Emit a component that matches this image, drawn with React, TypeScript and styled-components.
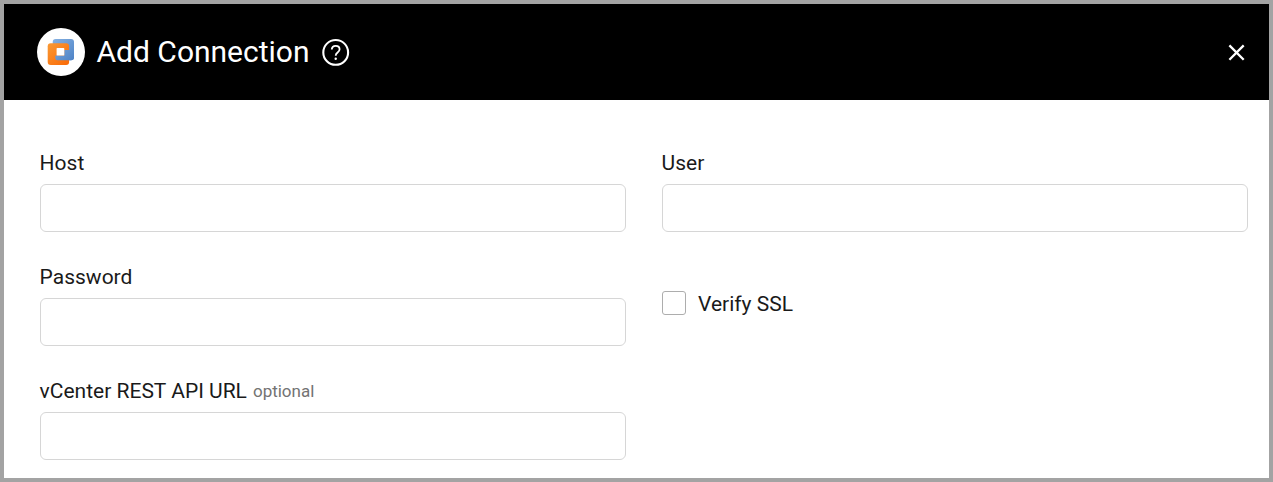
import React from "react";
import styled, { createGlobalStyle } from "styled-components";

const GlobalStyle = createGlobalStyle`
  *, *::before, *::after { box-sizing: border-box; }
  body { margin: 0; background: #fff; font-family: Roboto, sans-serif; color: #1a1a1a; }
`;

const Dialog = styled.section`
  display: flex;
  flex-direction: column;
  width: 100%;
  height: 482px;
  border: 4px solid #a3a3a3;
  background: #fff;
  overflow: hidden;
`;

const Header = styled.header`
  display: flex;
  align-items: center;
  flex: none;
  height: 96px;
  padding: 0 20px 0 33px;
  background: #000;
  color: #fff;
`;

const LogoBadge = styled.div`
  width: 48px;
  height: 48px;
  border-radius: 50%;
  background: #fff;
  svg { display: block; }
`;

const Title = styled.h1`
  width: 213px;
  margin: 0 0 0 11.5px;
  font-size: 30px;
  font-weight: 400;
  line-height: 40px;
  white-space: nowrap;
`;

const IconButton = styled.button<{ $end?: boolean }>`
  display: flex;
  padding: 0;
  border: 0;
  background: none;
  color: inherit;
  margin-left: ${({ $end }) => ($end ? "auto" : "12px")};
`;

const Form = styled.form`
  display: grid;
  grid-template-columns: 586px 586px;
  grid-auto-rows: 84px;
  gap: 30px 36px;
  padding: 48px 0 0 36px;
`;

const Field = styled.label`
  display: flex;
  flex-direction: column;
`;

const LabelText = styled.span`
  display: flex;
  height: 36px;
  margin-left: -0.4px;
  font-size: 21px;
  line-height: 30px;
  white-space: nowrap;
`;

const Optional = styled.span`
  margin-left: 6px;
  font-size: 17px;
  color: #737373;
`;

const Input = styled.input`
  width: 100%;
  height: 48px;
  padding: 0 12px;
  border: 1px solid #d6d6d6;
  border-radius: 6px;
  background: #fff;
  font: inherit;
  font-size: 21px;
  outline: none;
`;

const CheckField = styled.label`
  display: flex;
  align-items: center;
  align-self: start;
  gap: 12px;
  height: 30px;
  margin-top: 26px;
  font-size: 21px;
  line-height: 30px;
`;

const CheckText = styled.span`
  padding-top: 2px;
`;

const Checkbox = styled.input`
  appearance: none;
  width: 24px;
  height: 24px;
  margin: 0;
  border: 1px solid #adadad;
  border-radius: 3px;
  background: #fff;
`;

const Logo = () => (
  <svg width="48" height="48" viewBox="0 0 48 48" fill="none">
    <defs>
      <linearGradient id="blue" x1="17" y1="11" x2="37" y2="33" gradientUnits="userSpaceOnUse">
        <stop stopColor="#84afe0" />
        <stop offset="1" stopColor="#4c82c6" />
      </linearGradient>
      <linearGradient id="orange" x1="11" y1="15" x2="30" y2="37" gradientUnits="userSpaceOnUse">
        <stop stopColor="#f99a35" />
        <stop offset="1" stopColor="#fa6b08" />
      </linearGradient>
    </defs>
    <rect x="15.7" y="11" width="21.3" height="21.3" rx="3" fill="url(#blue)" />
    <rect x="10.7" y="15.3" width="21.4" height="21.7" rx="3" fill="url(#orange)" />
    <path d="M18.3 27.6h9V22h9.7v7.3q0 3-3 3H20.3q-2 0-2-2z" fill="url(#blue)" />
    <rect x="19.6" y="20" width="7.7" height="7.6" rx=".7" fill="#fff" />
  </svg>
);

const HelpIcon = () => (
  <svg width="28" height="28" viewBox="0 0 28 28" fill="none" stroke="currentColor" strokeWidth="1.8">
    <circle cx="13.7" cy="14.4" r="12.4" strokeWidth="2.1" />
    <path d="M9.8 11.6c0-2.3 1.6-3.8 3.9-3.8s3.9 1.5 3.9 3.5c0 1.4-.8 2.3-2 3.2-1.2.9-1.9 1.5-1.9 3.2" />
    <circle cx="13.7" cy="20.7" r="1.2" fill="currentColor" stroke="none" />
  </svg>
);

const CloseIcon = () => (
  <svg width="24" height="24" viewBox="0 0 24 24" fill="none" stroke="currentColor" strokeWidth="2.3">
    <path d="M4.4 5.4l14.3 14.3M18.7 5.4L4.4 19.7" />
  </svg>
);

interface TextFieldProps {
  label: string;
  type?: string;
  optional?: boolean;
}

const TextField = ({ label, type = "text", optional }: TextFieldProps) => (
  <Field>
    <LabelText>
      {label}
      {optional && <Optional>optional</Optional>}
    </LabelText>
    <Input type={type} />
  </Field>
);

export default function App() {
  return (
    <>
      <GlobalStyle />
      <Dialog>
        <Header>
          <LogoBadge><Logo /></LogoBadge>
          <Title>Add Connection</Title>
          <IconButton type="button" aria-label="Help"><HelpIcon /></IconButton>
          <IconButton type="button" aria-label="Close" $end><CloseIcon /></IconButton>
        </Header>
        <Form>
          <TextField label="Host" />
          <TextField label="User" />
          <TextField label="Password" type="password" />
          <CheckField><Checkbox type="checkbox" /><CheckText>Verify SSL</CheckText></CheckField>
          <TextField label="vCenter REST API URL" optional />
        </Form>
      </Dialog>
    </>
  );
}
